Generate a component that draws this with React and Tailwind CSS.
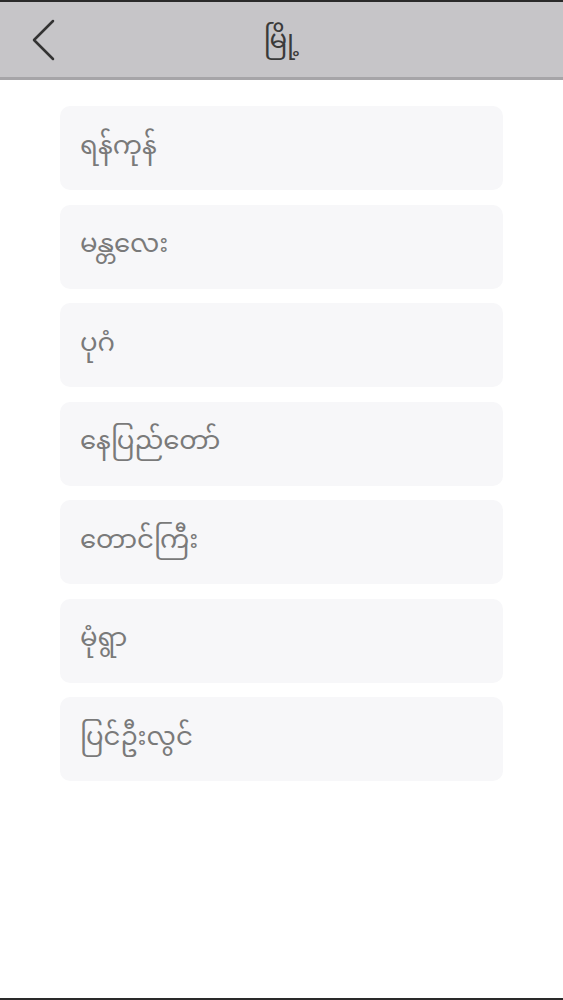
import React from 'react';

const cities = ['ရန်ကုန်', 'မန္တလေး', 'ပုဂံ', 'နေပြည်တော်', 'တောင်ကြီး', 'မုံရွာ', 'ပြင်ဦးလွင်'];

const App = () => {
  return (
    <div className="h-[1000px] w-full bg-white flex flex-col border-t-2 border-b-2 border-[#2a2a2a] overflow-hidden" style={{ fontFamily: '"Noto Sans Myanmar", "Noto Sans", "DejaVu Sans", sans-serif' }}>
      {/* header */}
      <div className="h-[78px] bg-[#c6c5c8] border-b-[3px] border-[#a6a5a8] flex items-center relative shrink-0">
        <button className="absolute left-[28px] top-[16px] w-[30px] h-[44px] flex items-center justify-center">
          <svg width="26" height="44" viewBox="0 0 26 44" fill="none">
            <path d="M23 3 L4 22 L23 41" stroke="#333" strokeWidth="2.5" strokeLinecap="round" strokeLinejoin="round" />
          </svg>
        </button>
        <h1 className="flex-1 text-center text-[26px] text-[#3a3a3a] pt-[6px]">မြို့</h1>
      </div>

      {/* list */}
      <div className="flex flex-col gap-[14.5px] px-[60px] pt-[26px]">
        {cities.map((c) => (
          <div key={c} className="h-[84px] bg-[#f7f7f9] rounded-[10px] flex items-center px-[20px]">
            <span className="text-[26px] text-[#7a7a7a]">{c}</span>
          </div>
        ))}
      </div>
    </div>
  );
};

export default App;
